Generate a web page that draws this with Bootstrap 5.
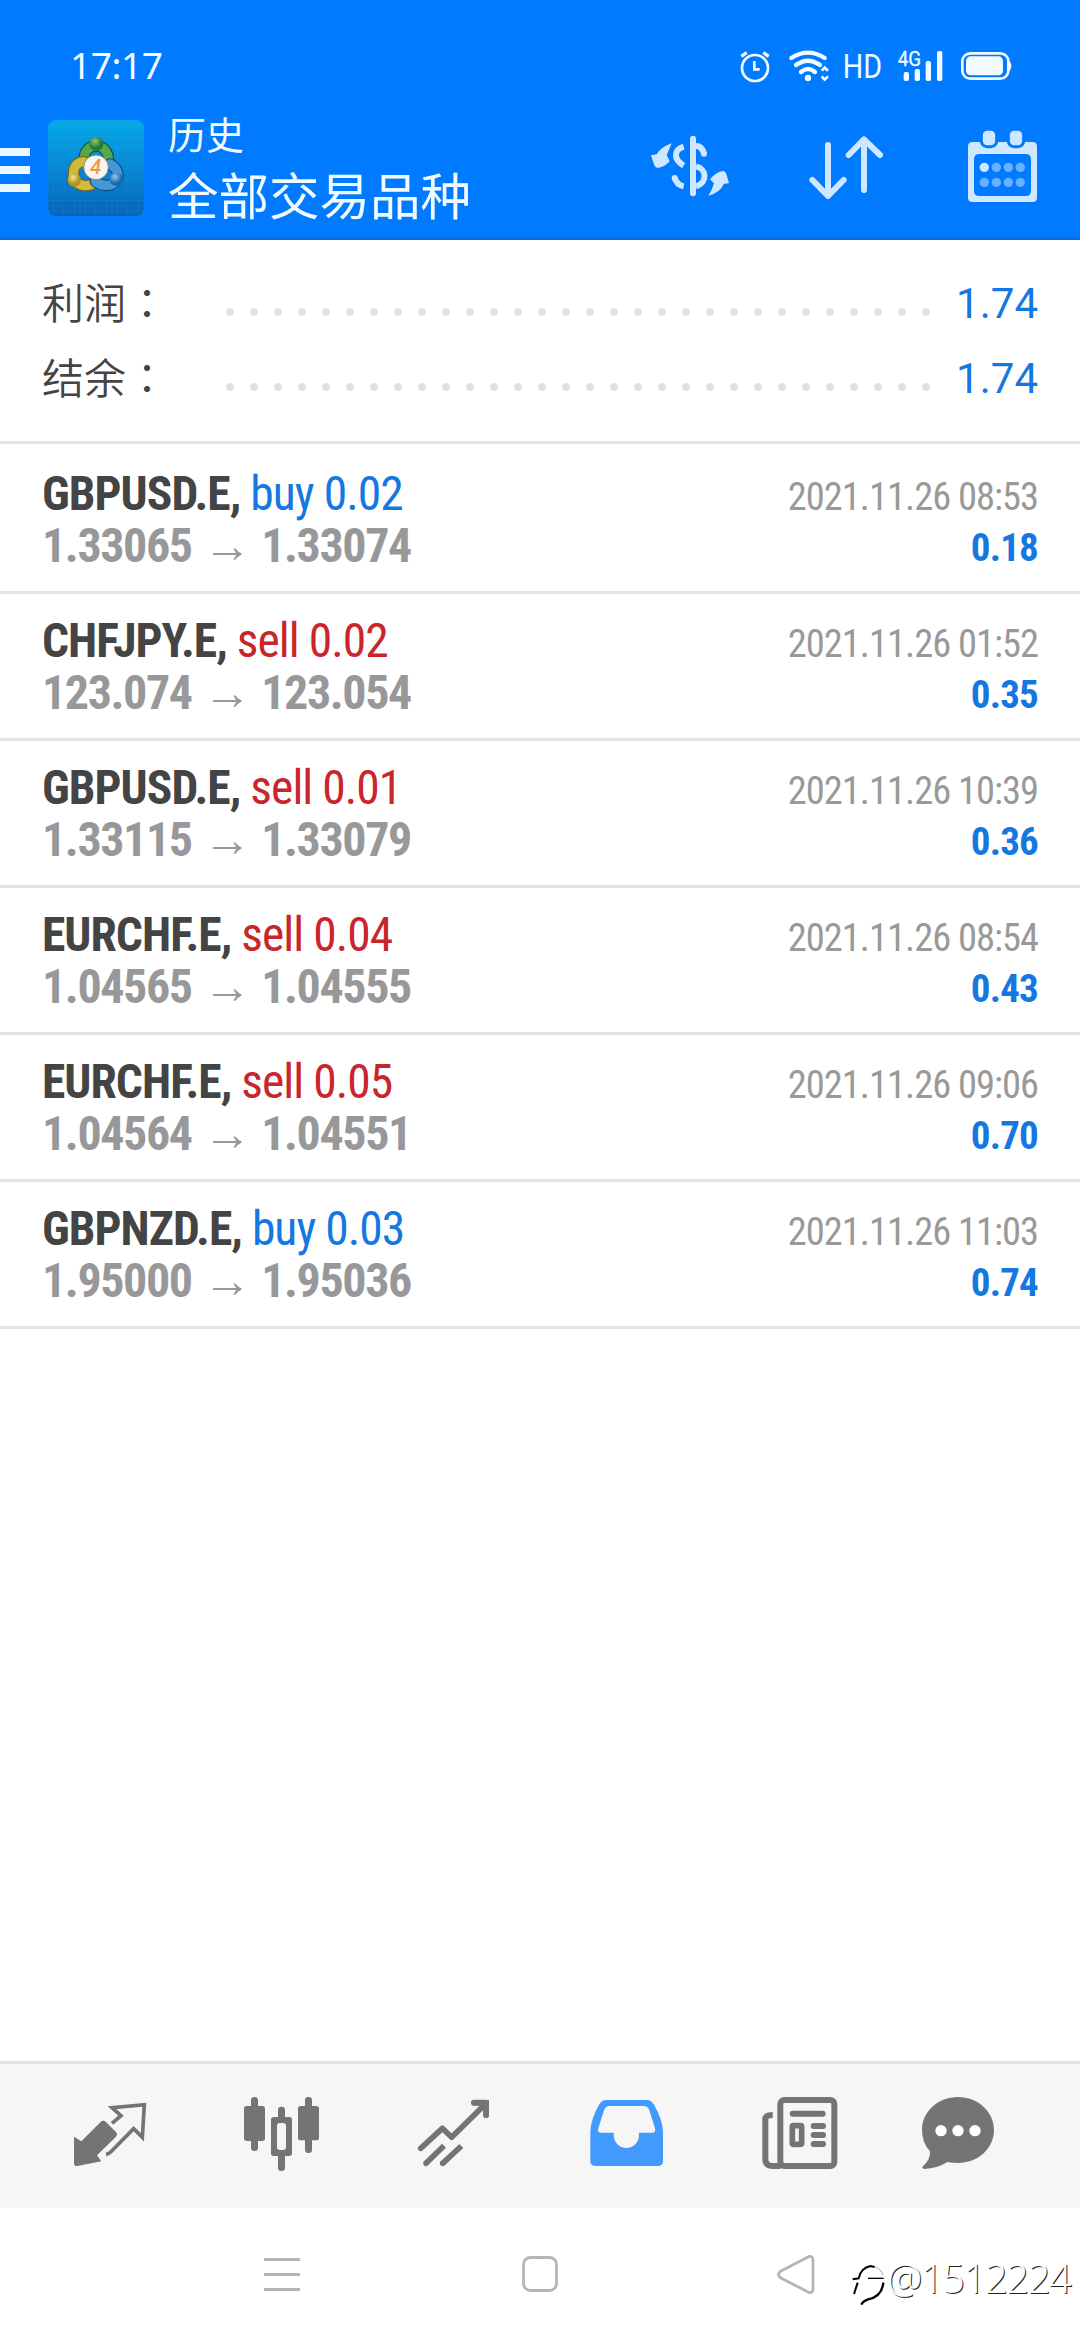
<!DOCTYPE html>
<html lang="zh-CN">
<head>
<meta charset="utf-8">
<meta name="viewport" content="width=device-width, initial-scale=1">
<title>历史</title>
<link href="https://cdn.jsdelivr.net/npm/bootstrap@5.3.0/dist/css/bootstrap.min.css" rel="stylesheet">
<style>
  body { width: 1080px; height: 2340px; overflow: hidden; background: #fff; font-family: Roboto, "Noto Sans CJK SC", sans-serif; }
  svg { display: block; flex: none; }
  .top-zone { height: 240px; background: #007aff; border-bottom: 3px solid #0d6bd6; color: #f0faff; }
  .status-line { height: 108px; padding: 24px 0 0 70px; }
  .clock { font: 400 37px/82px "Noto Sans", sans-serif; letter-spacing: -.4px; }
  .burger { width: 30px; margin-top: 40px; gap: 10px; }
  .burger i { display: block; height: 8px; background: #ecf8ff; }
  .app-logo { margin: 12px 0 0 18px; }
  .heading-block { margin: -2px 0 0 24px; font-family: "Noto Sans CJK SC", sans-serif; font-weight: 400; }
  .heading-small { font-size: 38px; line-height: 54px; }
  .heading-large { font-size: 50.5px; line-height: 66px; }
  .totals { height: 204px; padding: 27px 42px 0 42px; border-bottom: 3px solid #e3e3e3; margin-bottom: 3px; }
  .total-line { height: 75px; }
  .total-name { width: 176px; font: 350 42px/67px "Noto Sans CJK TC", "Noto Sans CJK SC", sans-serif; color: #444; }
  .dots { height: 8px; width: 720px; margin: 14px 0 0 0; background: radial-gradient(circle at 12px 4px, #e2e2e2 3.6px, transparent 4.4px) 0 0 / 24px 8px repeat-x; }
  .total-sum { font-size: 42px; line-height: 73px; color: #1577e0; }
  .deal { height: 147px; padding: 22px 42px 0 42px; border-bottom: 3px solid #e3e3e3; font-family: "Roboto Condensed", Roboto, sans-serif; }
  .deal-name { font-size: 47.5px; line-height: 51px; height: 51px; color: #444; white-space: pre; letter-spacing: -.95px; }
  .deal-name b { font-weight: 700; }
  .buy { color: #1577e0; }
  .sell { color: #c9252b; }
  .deal-prices { font-size: 48px; line-height: 51px; font-weight: 700; color: #98989a; letter-spacing: -1.4px; word-spacing: 1.8px; }
  .deal-time { font-size: 38.5px; line-height: 56px; height: 56px; color: #999; letter-spacing: -1px; }
  .deal-profit { font-size: 39px; line-height: 46px; font-weight: 700; color: #1577e0; letter-spacing: -.8px; }
  .tab-strip { height: 147px; border-top: 3px solid #e2e2e2; background: #f6f6f6; padding-left: 24px; }
  .system-keys { height: 132px; position: relative; }
  .signature { position: absolute; left: 850px; top: 40px; }
  .signature span { font: 300 39.5px/60px "Noto Sans", sans-serif; color: #fff; text-shadow: 1px 1px 0 #222; letter-spacing: -1.2px; margin-left: 1px; }
</style>
</head>
<body class="d-flex flex-column">
<header class="top-zone flex-shrink-0">
  <div class="status-line d-flex">
    <span class="clock">17:17</span>
    <svg class="ms-auto" width="360" height="84" viewBox="720 24 360 84" fill="none" stroke="#f0faff">
      <g transform="translate(600 30) scale(.33333)">
        <circle cx="465" cy="114" r="39" stroke-width="8"/>
        <path d="M463 93V118H479" stroke-width="8"/>
        <path d="M424 79L440 68M506 79L490 68" stroke-width="10"/>
        <path d="M574 84Q624 52 674 84" stroke-width="13" stroke-linecap="round"/>
        <path d="M588 105Q624 79 660 105" stroke-width="13" stroke-linecap="round"/>
        <path d="M603 126Q624 108 645 126" stroke-width="13" stroke-linecap="round"/>
        <circle cx="624" cy="144" r="9.500" fill="#f0faff" stroke="none"/>
        <path d="M665 122L674 113L684 122M665 139L674 149L684 139" stroke-width="8"/>
        <g fill="#f0faff" stroke="none">
          <rect x="911" y="126" width="16" height="27" rx="5"/><rect x="944" y="117" width="16" height="36" rx="5"/><rect x="977" y="93" width="16" height="60" rx="5"/><rect x="1011" y="63" width="16" height="90" rx="5"/>
          <rect x="1098" y="79" width="111" height="57" rx="14"/>
          <path d="M1226 92Q1234 96 1234 108Q1234 120 1226 124Z"/>
        </g>
        <rect x="1087" y="70" width="138" height="76" rx="24" stroke-width="8"/>
        <g fill="#f0faff" stroke="none" font-family="Roboto, sans-serif">
          <text x="728" y="143" font-size="99" textLength="118" lengthAdjust="spacingAndGlyphs">HD</text>
          <text x="893" y="107" font-size="60" stroke="#f0faff" stroke-width="1" textLength="70" lengthAdjust="spacingAndGlyphs">4G</text>
        </g>
      </g>
    </svg>
  </div>
  <div class="d-flex">
    <div class="burger d-flex flex-column"><i></i><i></i><i></i></div>
    <svg class="app-logo" width="96" height="96" viewBox="24 30 288 288">
      <defs>
        <linearGradient id="sky" x1="0" y1="0" x2="0" y2="1"><stop offset="0" stop-color="#05a8e8"/><stop offset=".45" stop-color="#078bd6"/><stop offset="1" stop-color="#0763b8"/></linearGradient>
        <radialGradient id="gr" cx=".4" cy=".3"><stop offset="0" stop-color="#8cc878"/><stop offset="1" stop-color="#1f7a34"/></radialGradient>
        <radialGradient id="ye" cx=".4" cy=".3"><stop offset="0" stop-color="#f6e68c"/><stop offset="1" stop-color="#b0911d"/></radialGradient>
        <radialGradient id="bl" cx=".4" cy=".3"><stop offset="0" stop-color="#8fcdf2"/><stop offset="1" stop-color="#1769b0"/></radialGradient>
      </defs>
      <rect x="24" y="30" width="288" height="288" rx="24" fill="url(#sky)"/>
      <path d="M40 30V318M72 30V318M104 30V318M136 30V318M168 30V318M200 30V318M232 30V318M264 30V318M296 30V318M24 48H312M24 80H312M24 112H312M24 144H312M24 176H312M24 208H312M24 240H312M24 272H312M24 304H312" stroke="#5cc4f0" stroke-opacity=".22" stroke-width="1.500"/>
      <g fill="none" stroke-linecap="round">
        <path d="M132 154C130 122 148 108 168 108S208 122 206 160" stroke="#12563d" stroke-width="34"/>
        <path d="M132 154C130 122 148 108 168 108S208 122 206 160" stroke="#58a64e" stroke-width="27"/>
        <path d="M134 156C110 154 98 172 101 200C104 222 132 234 158 222" stroke="#6b6a22" stroke-width="35"/>
        <path d="M134 156C110 154 98 172 101 200C104 222 132 234 158 222" stroke="#d2b93a" stroke-width="28"/>
        <path d="M210 162C230 172 240 194 230 210C218 230 188 232 166 214" stroke="#0c4d8c" stroke-width="35"/>
        <path d="M210 162C230 172 240 194 230 210C218 230 188 232 166 214" stroke="#4597d6" stroke-width="28"/>
      </g>
      <circle cx="169" cy="102" r="21" fill="url(#gr)"/><circle cx="103" cy="210" r="20" fill="url(#ye)"/><circle cx="229" cy="208" r="20" fill="url(#bl)"/>
      <circle cx="168" cy="172" r="37" fill="#f8f6f2" stroke="#77776a" stroke-width="2.500"/>
      <text x="167" y="193" font-family="Roboto, sans-serif" font-style="italic" font-weight="500" font-size="62" text-anchor="middle" fill="#f09a45">4</text>
    </svg>
    <div class="heading-block">
      <div class="heading-small">历史</div>
      <div class="heading-large">全部交易品种</div>
    </div>
    <svg class="ms-auto" width="440" height="128" viewBox="640 108 440 128" fill="none" stroke="#cfe8ff" stroke-linecap="round" stroke-linejoin="round">
      <g transform="translate(640 120) scale(.33333)">
        <path d="M159 56V220" stroke-width="18"/>
        <path d="M131 80C100 90 100 118 131 137M168 77C182 79 189 86 192 101M168 139C202 146 202 190 168 199M104 173C108 188 118 196 131 199" stroke-width="18" stroke-linecap="butt"/>
        <circle cx="192" cy="101" r="9" fill="#cfe8ff" stroke="none"/><circle cx="104" cy="174" r="9" fill="#cfe8ff" stroke="none"/>
        <path d="M95 70Q88 88 80 105L89 124Q74 141 54 144Q46 144 43 136L33 106L50 103Q64 80 95 70Z" fill="#cfe8ff" stroke="none"/>
        <path d="M205 227Q216 212 222 190L210 178Q228 155 250 153Q257 154 259 162L267 190L252 191Q240 218 205 227Z" fill="#cfe8ff" stroke="none"/>
      </g>
      <g transform="translate(600 30) scale(.33333)">
        <path d="M684 345V496M637 450L684 498L731 450M792 480V330M746 375L792 328L840 375" stroke-width="18"/>
        <path fill-rule="evenodd" fill="#cfe8ff" stroke="none" d="M1118 336H1298Q1311 336 1311 349V503Q1311 516 1298 516H1118Q1104 516 1104 503V349Q1104 336 1118 336ZM1138 372Q1122 372 1122 388V482Q1122 498 1138 498H1277Q1293 498 1293 482V388Q1293 372 1277 372Z"/>
        <g fill="#cfe8ff" stroke="#007aff" stroke-width="9"><rect x="1144" y="298" width="46" height="52" rx="17"/><rect x="1225" y="298" width="46" height="52" rx="17"/></g>
        <g fill="#67b1ff" stroke="none"><circle cx="1153" cy="412" r="14" fill="#cfe8ff"/><circle cx="1189" cy="412" r="14"/><circle cx="1225" cy="412" r="14"/><circle cx="1261" cy="412" r="14"/><circle cx="1153" cy="457" r="14"/><circle cx="1189" cy="457" r="14"/><circle cx="1225" cy="457" r="14"/><circle cx="1261" cy="457" r="14"/></g>
      </g>
    </svg>
  </div>
</header>

<section class="totals flex-shrink-0">
  <div class="total-line d-flex"><span class="total-name">利润<span lang="zh-TW">：</span></span><span class="dots align-self-center"></span><span class="total-sum ms-auto">1.74</span></div>
  <div class="total-line d-flex"><span class="total-name">结余<span lang="zh-TW">：</span></span><span class="dots align-self-center"></span><span class="total-sum ms-auto">1.74</span></div>
</section>

<main class="flex-grow-1">
  <div class="deal d-flex justify-content-between"><div><div class="deal-name"><b>GBPUSD.E,</b> <span class="buy">buy 0.02</span></div><div class="deal-prices">1.33065 → 1.33074</div></div><div class="text-end"><div class="deal-time">2021.11.26 08:53</div><div class="deal-profit">0.18</div></div></div>
  <div class="deal d-flex justify-content-between"><div><div class="deal-name"><b>CHFJPY.E,</b> <span class="sell">sell 0.02</span></div><div class="deal-prices">123.074 → 123.054</div></div><div class="text-end"><div class="deal-time">2021.11.26 01:52</div><div class="deal-profit">0.35</div></div></div>
  <div class="deal d-flex justify-content-between"><div><div class="deal-name"><b>GBPUSD.E,</b> <span class="sell">sell 0.01</span></div><div class="deal-prices">1.33115 → 1.33079</div></div><div class="text-end"><div class="deal-time">2021.11.26 10:39</div><div class="deal-profit">0.36</div></div></div>
  <div class="deal d-flex justify-content-between"><div><div class="deal-name"><b>EURCHF.E,</b> <span class="sell">sell 0.04</span></div><div class="deal-prices">1.04565 → 1.04555</div></div><div class="text-end"><div class="deal-time">2021.11.26 08:54</div><div class="deal-profit">0.43</div></div></div>
  <div class="deal d-flex justify-content-between"><div><div class="deal-name"><b>EURCHF.E,</b> <span class="sell">sell 0.05</span></div><div class="deal-prices">1.04564 → 1.04551</div></div><div class="text-end"><div class="deal-time">2021.11.26 09:06</div><div class="deal-profit">0.70</div></div></div>
  <div class="deal d-flex justify-content-between"><div><div class="deal-name"><b>GBPNZD.E,</b> <span class="buy">buy 0.03</span></div><div class="deal-prices">1.95000 → 1.95036</div></div><div class="text-end"><div class="deal-time">2021.11.26 11:03</div><div class="deal-profit">0.74</div></div></div>
</main>

<nav class="tab-strip d-flex flex-shrink-0">
  <svg width="173" height="144" viewBox="24 2064 173 144"><g transform="translate(40 2050) scale(.33333)">
    <path d="M102 260L124 274L182 216Q190 209 198 216L228 246Q234 253 228 260L171 316L184 334L112 348Q102 349 102 338Z" fill="#747474"/>
    <path d="M216 220L243 197L216 173L313 164L307 262L281 236L212 306Q206 312 198 313" fill="none" stroke="#747474" stroke-width="11"/></g></svg>
  <svg width="173" height="144" viewBox="197 2064 173 144"><g transform="translate(40 2050) scale(.33333)">
    <g fill="#747474"><rect x="612" y="168" width="63" height="105" rx="8"/><rect x="633" y="141" width="21" height="162" rx="10"/><rect x="774" y="168" width="63" height="103" rx="8"/><rect x="795" y="141" width="21" height="168" rx="10"/><rect x="714" y="170" width="21" height="193" rx="10"/><rect x="693" y="201" width="63" height="117" rx="8"/></g>
    <rect x="711" y="219" width="27" height="81" rx="9" fill="#f6f6f6"/></g></svg>
  <svg width="173" height="144" viewBox="370 2064 173 144"><g transform="translate(40 2050) scale(.33333)" fill="none" stroke="#747474" stroke-width="17" stroke-linecap="round">
    <path d="M1142 295L1207 235L1235 262L1334 164M1302 158H1338V195" stroke-linejoin="round"/><path d="M1302 158.500H1338.500V195"/><path d="M1158 340L1212 287M1208 340L1264 288" stroke-linecap="butt"/><path d="M1158 340V340.100M1208 340V340.100"/></g></svg>
  <svg width="173" height="144" viewBox="543 2064 173 144"><g transform="translate(540 2050) scale(.33333)">
    <path d="M198 150H321Q333 150 341 163Q367 206 369 244V334Q369 348 355 348H165Q151 348 151 334V244Q153 206 178 163Q186 150 198 150Z" fill="#429bfc"/>
    <path d="M208 168H312Q323 168 328 181L345 235Q348 248 338 248H297V255A38 39 0 0 1 221 255V248H182Q171 248 175 235L192 181Q197 168 208 168Z" fill="#f6f6f6"/></g></svg>
  <svg width="173" height="144" viewBox="716 2064 173 144"><g transform="translate(540 2050) scale(.33333)" fill="none" stroke="#747474" stroke-width="18">
    <rect x="721" y="150" width="162" height="198" rx="12"/><path d="M698 195Q676 195 676 208V328Q676 348 696 348H722"/>
    <path d="M758 191H848M821 228H849M821 255H849M821 282H849" stroke-linecap="round"/><rect x="757" y="227" width="28" height="56" rx="3" stroke-width="17"/></g></svg>
  <svg width="173" height="144" viewBox="889 2064 173 144"><g transform="translate(540 2050) scale(.33333)">
    <path d="M1254 141C1314 141 1362 185 1362 240S1314 339 1254 339Q1238 339 1222 336Q1192 355 1153 357Q1144 355 1149 348Q1172 330 1170 304Q1146 277 1146 240C1146 185 1194 141 1254 141Z" fill="#747474"/>
    <g fill="#fff"><circle cx="1203" cy="242" r="17"/><circle cx="1254" cy="242" r="17"/><circle cx="1305" cy="242" r="17"/></g></g></svg>
</nav>

<footer class="system-keys flex-shrink-0">
  <svg width="1080" height="132" viewBox="0 2208 1080 132" fill="none" stroke="#b5b5b5" stroke-width="2.800">
    <path d="M264 2259.500H300M264 2274.500H300M264 2289.500H300"/>
    <rect x="523.500" y="2257.500" width="33" height="33" rx="7"/>
    <path d="M809 2256.500L781 2271Q776 2274.500 781 2278L809 2292.500Q813 2293 813 2289V2260Q813 2256 809 2256.500Z" stroke-linejoin="round"/>
  </svg>
  <div class="signature d-flex">
    <svg width="36" height="60" viewBox="850 2248 36 60" fill="none">
      <g transform="translate(840 2240) scale(.33333)" stroke="#000" stroke-width="6">
        <path d="M38 118L56 115Q62 84 92 78L104 81"/><path d="M104 81Q124 86 129 106" stroke="#aaa" stroke-width="3"/><path d="M84 115H131" stroke-width="4"/><path d="M53 128L42 162"/><path d="M130 128Q126 170 84 178Q68 184 64 194" stroke-width="7"/>
      </g>
    </svg>
    <span>@1512224</span>
  </div>
</footer>
<script src="https://cdn.jsdelivr.net/npm/bootstrap@5.3.0/dist/js/bootstrap.bundle.min.js"></script>
</body>
</html>
